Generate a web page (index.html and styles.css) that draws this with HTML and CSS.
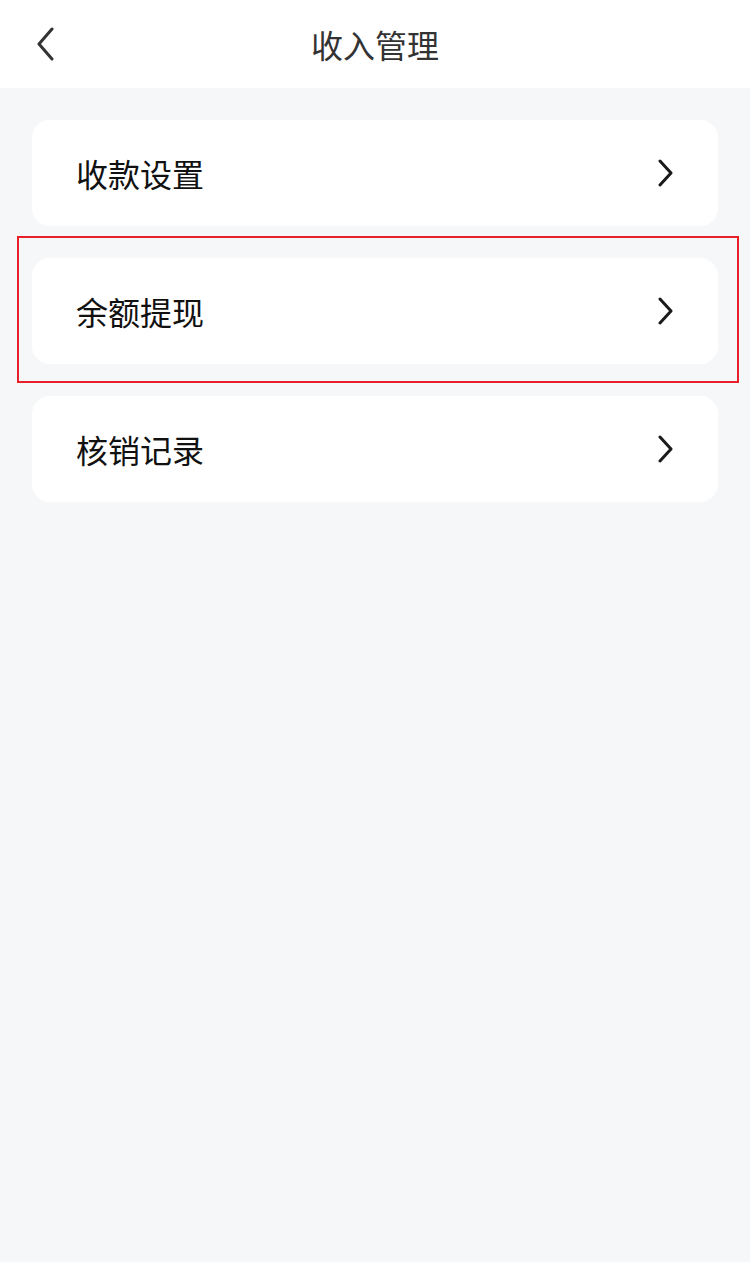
FILE: index.html
```html
<!DOCTYPE html>
<html>
  <head>
    <title>收入管理</title>
    <meta http-equiv="Content-Type" content="text/html; charset=UTF-8"/>
    <link rel="stylesheet" href="styles.css">
  </head>
  <body>
    <div class="page">
      <header class="nav-bar">
        <span class="nav-back">
          <svg width="24" height="34" viewBox="0 0 24 34" fill="none" stroke="#333" stroke-width="3" stroke-linecap="round" stroke-linejoin="round">
            <path d="M18 2 L5 17 L18 32"/>
          </svg>
        </span>
        <h1 class="nav-title">收入管理</h1>
      </header>

      <main class="menu">
        <a class="menu-item" href="#">
          <span class="menu-label">收款设置</span>
          <svg class="menu-arrow" width="20" height="28" viewBox="0 0 20 28" fill="none" stroke="#1a1a1a" stroke-width="3" stroke-linecap="round" stroke-linejoin="round">
            <path d="M4 2 L15 14 L4 26"/>
          </svg>
        </a>
        <a class="menu-item" href="#">
          <span class="menu-label">余额提现</span>
          <svg class="menu-arrow" width="20" height="28" viewBox="0 0 20 28" fill="none" stroke="#1a1a1a" stroke-width="3" stroke-linecap="round" stroke-linejoin="round">
            <path d="M4 2 L15 14 L4 26"/>
          </svg>
        </a>
        <a class="menu-item" href="#">
          <span class="menu-label">核销记录</span>
          <svg class="menu-arrow" width="20" height="28" viewBox="0 0 20 28" fill="none" stroke="#1a1a1a" stroke-width="3" stroke-linecap="round" stroke-linejoin="round">
            <path d="M4 2 L15 14 L4 26"/>
          </svg>
        </a>
      </main>

      <div class="highlight"></div>
    </div>
  </body>
</html>
```

FILE: styles.css
```css
html, body {
  margin: 0;
  padding: 0;
}
body {
  font-family: 'Noto Sans CJK SC', 'Noto Sans', sans-serif;
  background-color: #f6f7f9;
}

.page {
  position: relative;
  min-height: 1262px;
}

.nav-bar {
  height: 88px;
  background-color: #fff;
  display: flex;
  align-items: center;
  justify-content: center;
  position: relative;
}
.nav-back {
  position: absolute;
  left: 34px;
  top: 27px;
  display: flex;
}
.nav-title {
  margin: 0;
  font-size: 32px;
  font-weight: normal;
  color: #333;
  line-height: 1;
}

.menu {
  padding: 32px 32px;
  display: flex;
  flex-direction: column;
  gap: 32px;
}

.menu-item {
  height: 106px;
  background-color: #fff;
  border-radius: 18px;
  display: flex;
  align-items: center;
  justify-content: space-between;
  padding: 0 42px 0 44px;
  text-decoration: none;
}
.menu-label {
  font-size: 32px;
  color: #111;
  line-height: 1;
}
.menu-arrow {
  display: block;
}

.highlight {
  position: absolute;
  left: 17px;
  top: 236px;
  width: 718px;
  height: 143px;
  border: 2px solid #e8202a;
  pointer-events: none;
}
```
